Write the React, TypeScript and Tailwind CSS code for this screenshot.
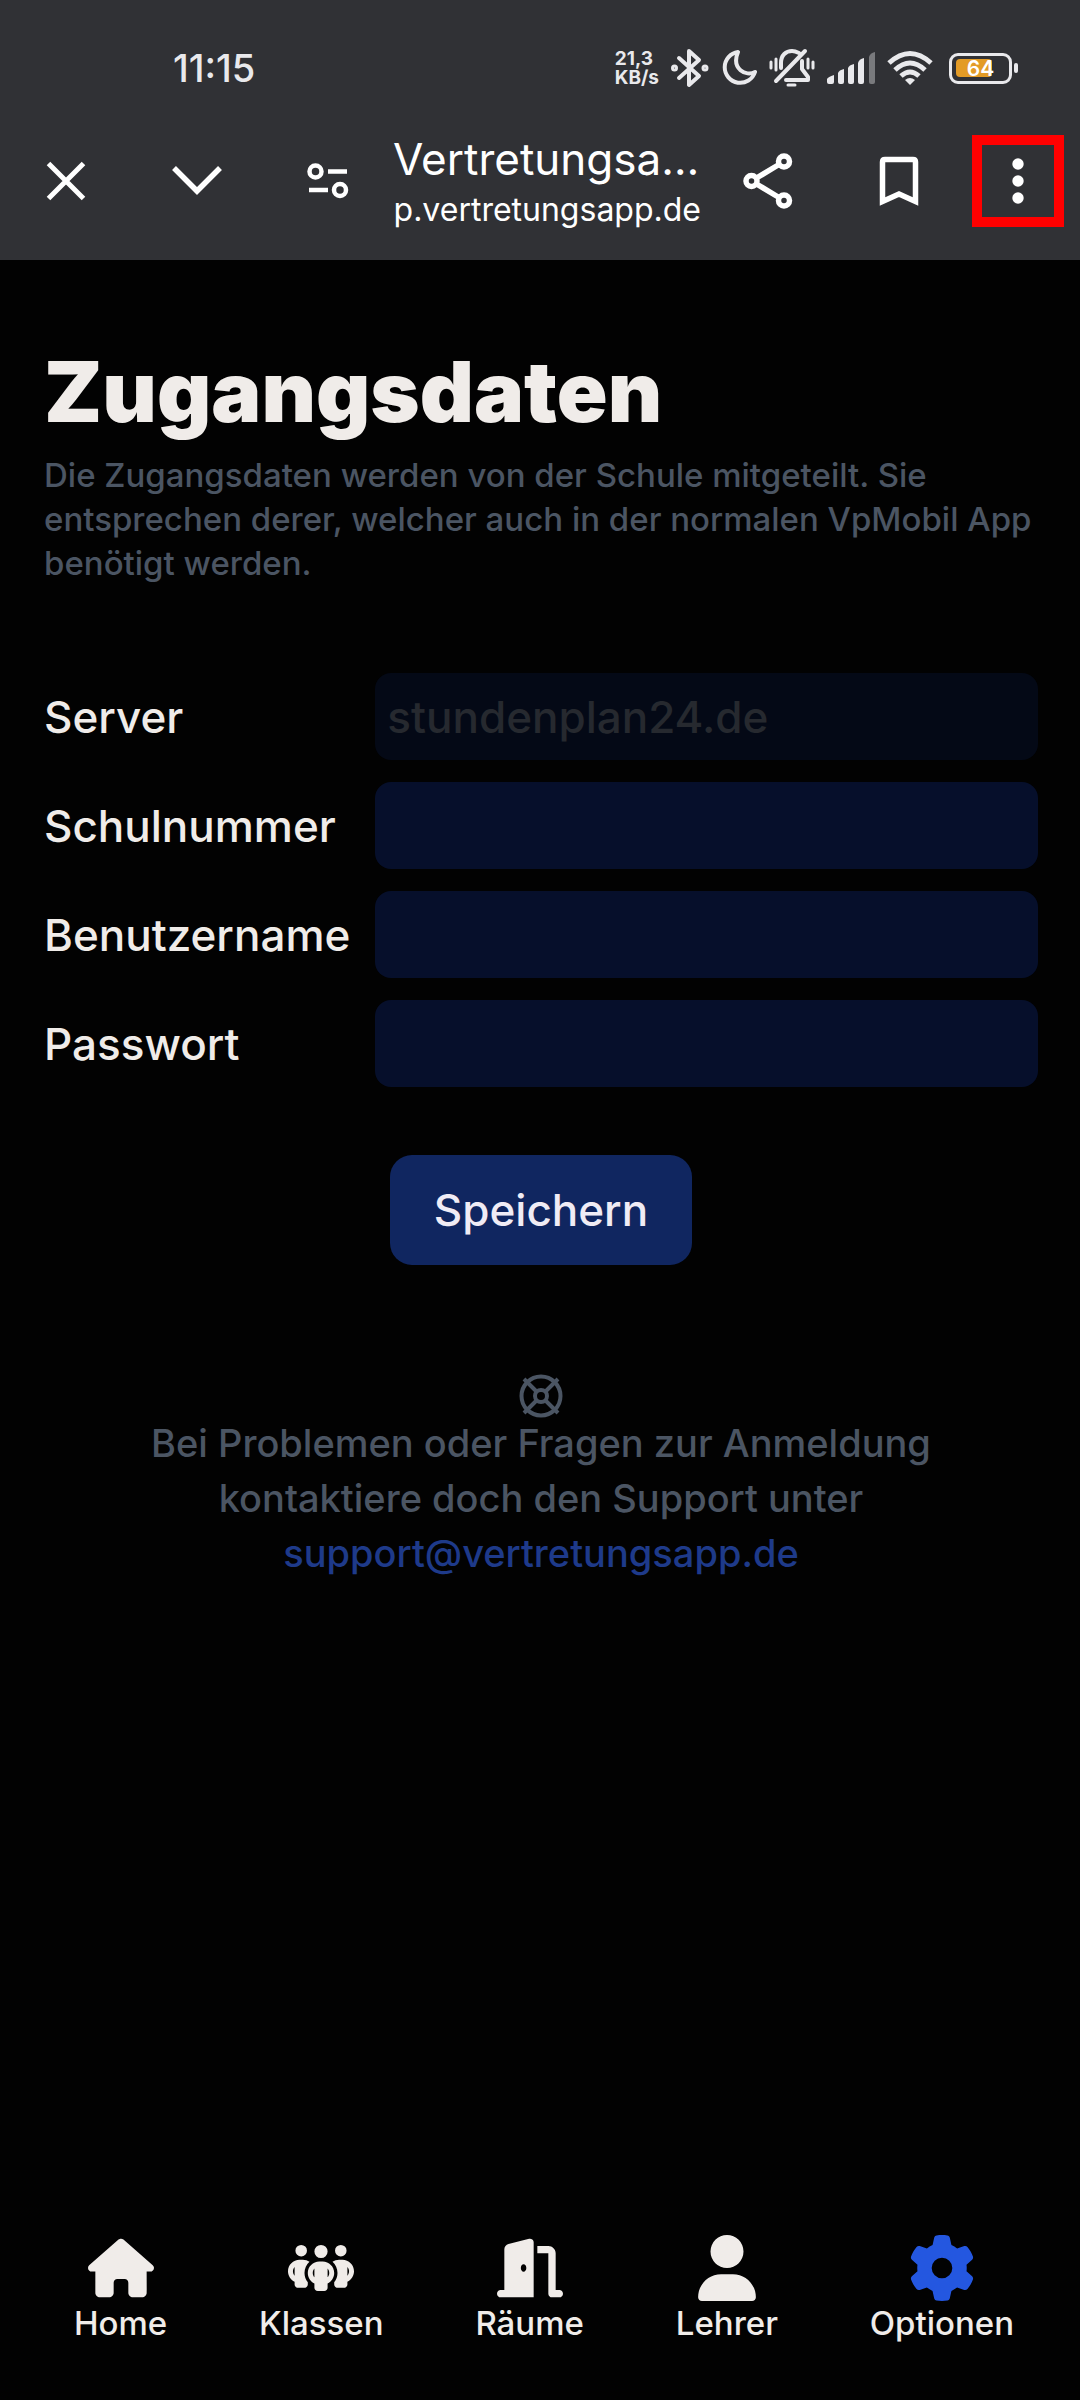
import type { ReactNode } from "react";
import { FaDoorOpen, FaGear, FaHouse, FaPeopleGroup, FaUser } from "react-icons/fa6";

function StatusBar() {
  return (
    <div className="flex h-[100px] items-end pl-[173px] pr-[62px] text-[#e9e9ec]">
      <time className="text-[38px] leading-[64px] font-medium">11:15</time>
      <div className="ml-auto flex h-16 items-center gap-3">
        <div className="text-[19px] leading-[19px] font-bold">
          <div>21,3</div>
          <div>KB/s</div>
        </div>
        <svg width="38" height="40" viewBox="0 0 38 40" fill="none" stroke="currentColor" strokeWidth="4" strokeLinejoin="round" strokeLinecap="round" aria-label="Bluetooth">
          <path d="M8 10 L28 28 L18 37 V3 L28 12 L8 30" />
          <circle cx="3.500" cy="20" r="1.500" />
          <circle cx="34" cy="20" r="1.500" />
        </svg>
        <svg width="36" height="38" viewBox="0 0 36 38" fill="none" stroke="currentColor" strokeWidth="4" strokeLinejoin="round" aria-label="Nicht stören">
          <path d="M17 3 A15.500 15.500 0 1 0 34 23 C25 28 10 20 17 3 Z" />
        </svg>
        <svg width="46" height="40" viewBox="0 0 46 40" fill="none" stroke="currentColor" strokeWidth="4" strokeLinejoin="round" strokeLinecap="round" aria-label="Vibration">
          <path d="M12 20 V15 C12 7 17 3 23 3 C26 3 28 4 30 5" />
          <path d="M33 13 V21 L39 29 V32 H17" />
          <path d="M36 3 L7 33" />
          <path d="M19 37 H26" strokeWidth="3" />
          <path d="M2 14 V20 M7 11 V22 M39 11 V20 M44 14 V20" strokeWidth="3" />
        </svg>
        <svg width="48" height="34" viewBox="0 0 48 34" fill="currentColor" aria-label="Mobilfunk">
          <path d="M0 28 Q1 26 7 24 V31 Q7 33 5 33 H2 Q0 33 0 31 Z" />
          <path d="M11 22 Q12 19 17 18 V31 Q17 33 15 33 H13 Q11 33 11 31 Z" />
          <path d="M21 17 Q22 14 27 13 V31 Q27 33 25 33 H23 Q21 33 21 31 Z" />
          <path d="M31 12 Q32 8 37 7 V31 Q37 33 35 33 H33 Q31 33 31 31 Z" />
          <path d="M42 6 Q43 2 48 1 V31 Q48 33 46 33 H44 Q42 33 42 31 Z" opacity="0.4" />
        </svg>
        <svg width="46" height="36" viewBox="0 0 46 36" fill="none" stroke="currentColor" strokeWidth="5" aria-label="WLAN">
          <path d="M2 13 Q23 -6 44 13" />
          <path d="M8 20 Q23 6 38 20" />
          <path d="M14 26 Q23 18 32 26" />
          <path d="M18 30 Q23 26 28 30 L23 35 Z" fill="currentColor" stroke="none" />
        </svg>
        <div className="ml-1 flex items-center gap-[2px]" aria-label="Akku">
          <div className="relative flex h-[31px] w-[63px] items-center rounded-[9px] border-[3px] border-current p-[4px]">
            <div className="h-[18px] w-9 rounded-[4px] bg-[#e39b26]" />
            <span className="absolute inset-0 text-center text-[21px] leading-[25px] font-semibold text-white">64</span>
          </div>
          <div className="h-[10px] w-[4px] rounded-[2px] bg-current" />
        </div>
      </div>
    </div>
  );
}

function ToolButton({ label, children }: { label: string; children: ReactNode }) {
  return (
    <button type="button" aria-label={label} className="flex h-[132px] w-[131px] shrink-0 items-center justify-center">
      {children}
    </button>
  );
}

function Toolbar() {
  return (
    <div className="flex h-40 items-start pt-[15px] text-white">
      <ToolButton label="Schließen">
        <svg width="40" height="40" viewBox="0 0 40 40" stroke="currentColor" strokeWidth="5">
          <path d="M2.500 2.500 L37.500 37.500 M37.500 2.500 L2.500 37.500" />
        </svg>
      </ToolButton>
      <ToolButton label="Minimieren">
        <svg width="50" height="30" viewBox="0 0 50 30" fill="none" stroke="currentColor" strokeWidth="5.500">
          <path d="M2 2 L25 25 L48 2" />
        </svg>
      </ToolButton>
      <ToolButton label="Website-Einstellungen">
        <svg width="42" height="36" viewBox="0 0 42 36" fill="none" stroke="currentColor" strokeWidth="4.500">
          <circle cx="8.500" cy="8.500" r="6" />
          <path d="M21 8.500 H40 M2 27 H21" />
          <circle cx="33" cy="27" r="6" />
        </svg>
      </ToolButton>
      <div className="flex h-[132px] min-w-0 flex-1 flex-col justify-center overflow-hidden pt-[3px]">
        <div className="text-[44px] leading-[54px] whitespace-nowrap">Vertretungsa…</div>
        <div className="flex justify-end pr-px text-[32px] leading-[47px] whitespace-nowrap">app.vertretungsapp.de</div>
      </div>
      <ToolButton label="Teilen">
        <svg width="50" height="56" viewBox="0 0 50 56" fill="none" stroke="currentColor" strokeWidth="5.500">
          <circle cx="8.500" cy="28" r="5.500" />
          <circle cx="41" cy="8.500" r="5.500" />
          <circle cx="41" cy="47.500" r="5.500" />
          <path d="M13.500 25 L36 11.500 M13.500 31 L36 44.500" />
        </svg>
      </ToolButton>
      <ToolButton label="Lesezeichen">
        <svg width="40" height="50" viewBox="0 0 40 50" fill="none" stroke="currentColor" strokeWidth="5.500">
          <path d="M3.500 45.500 V6 Q3.500 3.500 6 3.500 H34 Q36.500 3.500 36.500 6 V45.500 L20 38 Z" />
        </svg>
      </ToolButton>
      <button type="button" aria-label="Mehr" className="mt-5 mr-4 ml-2 flex size-[92px] shrink-0 items-center justify-center border-[10px] border-[#ff0000]">
        <svg width="12" height="46" viewBox="0 0 12 46" fill="currentColor">
          <circle cx="6" cy="6" r="5.700" />
          <circle cx="6" cy="23" r="5.700" />
          <circle cx="6" cy="40" r="5.700" />
        </svg>
      </button>
    </div>
  );
}

const inputClass =
  "h-[87px] w-full min-w-0 rounded-2xl bg-[#060f2b] px-3 text-[44px] text-[#f0ece9] outline-none placeholder:text-[#26292f] disabled:bg-[#040916]";

const fields = [
  { id: "server", label: "Server", type: "text", placeholder: "stundenplan24.de", disabled: true },
  { id: "schulnummer", label: "Schulnummer", type: "text" },
  { id: "benutzername", label: "Benutzername", type: "text" },
  { id: "passwort", label: "Passwort", type: "password" },
];

function LoginForm() {
  return (
    <form className="mt-[88px] flex flex-col gap-[22px]" onSubmit={(e) => e.preventDefault()}>
      {fields.map((f) => (
        <div key={f.id} className="grid grid-cols-[1fr_2fr] items-center">
          <label htmlFor={f.id} className="text-[44px] leading-[66px]">{f.label}</label>
          <input id={f.id} type={f.type} placeholder={f.placeholder} disabled={f.disabled} className={inputClass} />
        </div>
      ))}
      <button type="submit" className="mt-[46px] self-center rounded-[22px] bg-[#102660] px-11 py-[22px] text-[44px] leading-[66px] text-[#f0ecf5]">
        Speichern
      </button>
    </form>
  );
}

const tabs = [
  { label: "Home", Icon: FaHouse },
  { label: "Klassen", Icon: FaPeopleGroup },
  { label: "Räume", Icon: FaDoorOpen },
  { label: "Lehrer", Icon: FaUser },
  { label: "Optionen", Icon: FaGear, active: true },
];

export default function App() {
  return (
    <div className="flex min-h-screen flex-col bg-[#020202] font-['Inter',sans-serif] font-medium text-[#f0ece9]">
      <header className="bg-[#303135] font-normal">
        <StatusBar />
        <Toolbar />
      </header>
      <main className="flex flex-1 flex-col pt-[88px] pr-[42px] pl-11">
        <h1 className="text-[84px] leading-[88px] font-black">Zugangsdaten</h1>
        <p className="mt-[17px] text-[33px] leading-[44px] text-[#4b5563]">
          Die Zugangsdaten werden von der Schule mitgeteilt. Sie entsprechen derer, welcher auch in der normalen VpMobil App benötigt werden.
        </p>
        <LoginForm />
        <section className="mt-[109px] flex flex-col items-center text-center text-[38px] leading-[55px] text-[#4b5563]">
          <svg width="44" height="44" viewBox="0 0 44 44" fill="none" stroke="currentColor" strokeWidth="4" aria-hidden="true">
            <circle cx="22" cy="22" r="19.500" />
            <circle cx="22" cy="22" r="6" />
            <path d="M5 5 L17.500 17.500 M39 5 L26.500 17.500 M5 39 L17.500 26.500 M39 39 L26.500 26.500" />
          </svg>
          <p className="-mt-0.5 max-w-[800px]">
            Bei Problemen oder Fragen zur Anmeldung kontaktiere doch den Support unter{" "}
            <a href="mailto:support@vertretungsapp.de" className="text-[#1e3a8a]">support@vertretungsapp.de</a>
          </p>
        </section>
      </main>
      <nav className="flex justify-around pr-5 pb-[55px] pl-7 text-[33px] leading-[44px]">
        {tabs.map(({ label, Icon, active }) => (
          <a key={label} href={"#" + label.toLowerCase()} className="flex flex-col items-center">
            <Icon className={active ? "size-[66px] text-[#2457e0]" : "size-[66px]"} />
            <span>{label}</span>
          </a>
        ))}
      </nav>
    </div>
  );
}
